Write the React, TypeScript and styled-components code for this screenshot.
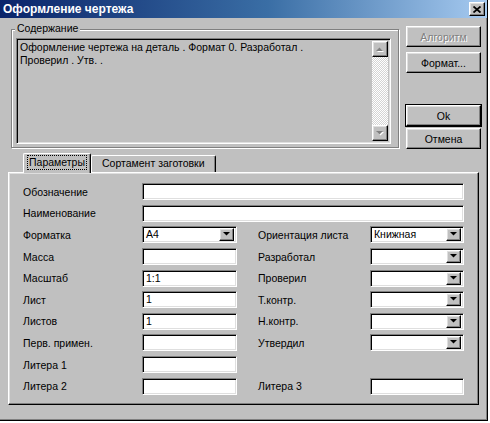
import { FC } from "react";
import styled, { createGlobalStyle, css } from "styled-components";

const GlobalStyle = createGlobalStyle`
    html, body {
        margin: 0;
        padding: 0;
        background: #ffffff;
    }
    body {
        font-family: "Liberation Sans", Arial, sans-serif;
        font-size: 10.5px;
        color: #000000;
    }
`

const raised = css`
    border: 1px solid;
    border-color: #ffffff #000000 #000000 #ffffff;
    box-shadow: inset -1px -1px 0 #808080, inset 1px 1px 0 #dfdfdf;
`
const sunken = css`
    border: 1px solid;
    border-color: #808080 #ffffff #ffffff #808080;
    box-shadow: inset 1px 1px 0 #000000, inset -1px -1px 0 #dfdfdf;
`

const Window = styled.div`
    box-sizing: border-box;
    width: 488px;
    height: 421px;
    background: #c0c0c0;
    border-right: 1px solid #000000;
    border-bottom: 1px solid #000000;
    box-shadow: inset -1px -1px 0 #808080;
    display: flex;
    flex-direction: column;
`
const TitleBar = styled.div`
    flex: none;
    height: 18px;
    display: flex;
    align-items: center;
    justify-content: space-between;
    padding: 0 2px 0 3px;
    background: linear-gradient(90deg, #0a246a 0%, #3a6ea5 55%, #a6caf0 100%);
    color: #ffffff;
    font-weight: bold;
    font-size: 12px;
`
const CloseButton = styled.div`
    box-sizing: border-box;
    width: 16px;
    height: 14px;
    display: flex;
    align-items: center;
    justify-content: center;
    background: #c0c0c0;
    ${raised}
`
const Body = styled.div`
    flex: 1;
    display: flex;
    flex-direction: column;
    padding: 8px 0 0 8px;
`
const TopRow = styled.div`
    display: flex;
    align-items: flex-start;
`
const GroupBox = styled.div`
    position: relative;
    box-sizing: border-box;
    width: 388px;
    height: 119px;
    margin: 3px 0 0 3px;
    padding: 8px 7px 3px 4px;
    border: 1px solid #808080;
    box-shadow: 1px 1px 0 #ffffff, inset 1px 1px 0 #ffffff;
    display: flex;
`
const GroupLabel = styled.span`
    position: absolute;
    top: -8px;
    left: 3px;
    padding: 0 2px;
    line-height: 13px;
    background: #c0c0c0;
`
const TextBox = styled.div`
    flex: 1;
    box-sizing: border-box;
    display: flex;
    background: #c0c0c0;
    padding: 2px;
    ${sunken}
`
const ContentText = styled.div`
    flex: 1;
    padding: 0 2px 0 1px;
    line-height: 13px;
    white-space: pre;
    overflow: hidden;
`
const ScrollBar = styled.div`
    width: 16px;
    display: flex;
    flex-direction: column;
    justify-content: space-between;
    background: repeating-conic-gradient(#ffffff 0 25%, #d4d4d4 0 50%) 0 0 / 2px 2px;
`
const ScrollArrow = styled.div`
    box-sizing: border-box;
    width: 16px;
    height: 16px;
    display: flex;
    align-items: center;
    justify-content: center;
    background: #c0c0c0;
    ${raised}
`
const ButtonColumn = styled.div`
    display: flex;
    flex-direction: column;
    margin-left: 7px;
    width: 75px;
`
const DialogButton = styled.div<{ $gap: number; $default?: boolean; $disabled?: boolean }>`
    box-sizing: border-box;
    height: 21px;
    margin-top: ${(p) => p.$gap}px;
    display: flex;
    align-items: center;
    justify-content: center;
    background: #c0c0c0;
    ${raised}
    color: ${(p) => (p.$disabled ? "#808080" : "#000000")};
    text-shadow: ${(p) => (p.$disabled ? "1px 1px 0 #ffffff" : "none")};
    outline: ${(p) => (p.$default ? "1px solid #000000" : "none")};
`
const TabStrip = styled.div`
    position: relative;
    z-index: 1;
    display: flex;
    align-items: flex-end;
    height: 20px;
    margin: 4px 0 -1px 0;
    padding-left: 15px;
`
const Tab = styled.div<{ $active?: boolean }>`
    box-sizing: border-box;
    height: ${(p) => (p.$active ? 20 : 17)}px;
    margin-bottom: ${(p) => (p.$active ? 0 : 1)}px;
    padding: ${(p) => (p.$active ? "2px 4px 0 4px" : "1px 9px 0 9px")};
    background: #c0c0c0;
    border-top: 1px solid #ffffff;
    border-left: 1px solid #ffffff;
    border-right: 1px solid #000000;
    border-radius: 2px 2px 0 0;
    box-shadow: inset -1px 0 0 #808080;
    line-height: 13px;
    white-space: nowrap;
`
const TabCaption = styled.span<{ $focused?: boolean }>`
    display: inline-block;
    padding: 0 1px;
    outline: ${(p) => (p.$focused ? "1px dotted #000000" : "none")};
`
const Panel = styled.div`
    box-sizing: border-box;
    width: 471px;
    height: 233px;
    padding: 8px 0 0 14px;
    background: #c0c0c0;
    ${raised}
`
const FormGrid = styled.div`
    display: grid;
    grid-template-columns: 119px 95px 21px 112px 94px;
    grid-auto-rows: 21.6px;
    align-items: center;
`
const FieldLabel = styled.div<{ $row: number; $col: string }>`
    grid-row: ${(p) => p.$row};
    grid-column: ${(p) => p.$col};
    white-space: nowrap;
`
const Field = styled.div<{ $row: number; $col: string }>`
    grid-row: ${(p) => p.$row};
    grid-column: ${(p) => p.$col};
    box-sizing: border-box;
    height: 17px;
    display: flex;
    align-items: center;
    padding: 2px 2px 2px 3px;
    background: #ffffff;
    line-height: 13px;
    ${sunken}
`
const FieldText = styled.span`
    flex: 1;
    white-space: nowrap;
`
const DropButton = styled.div`
    box-sizing: border-box;
    flex: none;
    width: 15px;
    height: 13px;
    display: flex;
    align-items: center;
    justify-content: center;
    background: #c0c0c0;
    ${raised}
`

const Arrow: FC<{ up?: boolean; disabled?: boolean }> = ({ up, disabled }) => (
    <svg width="8" height="5" viewBox="0 0 8 5">
        {disabled && <path d={up ? "M1 5h7L4.5 1.5z" : "M1 1h7L4.5 4.5z"} fill="#ffffff" />}
        <path d={up ? "M0 4h7L3.5 0.5z" : "M0 0h7L3.5 3.5z"} fill={disabled ? "#808080" : "#000000"} />
    </svg>
)

type Cell = { label: string; value?: string; combo?: boolean; wide?: boolean };
type Row = { left: Cell; right?: Cell };

const rows: Row[] = [
    { left: { label: "Обозначение", wide: true } },
    { left: { label: "Наименование", wide: true } },
    { left: { label: "Форматка", value: "A4", combo: true }, right: { label: "Ориентация листа", value: "Книжная", combo: true } },
    { left: { label: "Масса" }, right: { label: "Разработал", combo: true } },
    { left: { label: "Масштаб", value: "1:1" }, right: { label: "Проверил", combo: true } },
    { left: { label: "Лист", value: "1" }, right: { label: "Т.контр.", combo: true } },
    { left: { label: "Листов", value: "1" }, right: { label: "Н.контр.", combo: true } },
    { left: { label: "Перв. примен." }, right: { label: "Утвердил", combo: true } },
    { left: { label: "Литера 1" } },
    { left: { label: "Литера 2" }, right: { label: "Литера 3" } },
];

const renderCell = (cell: Cell, row: number, labelCol: string, fieldCol: string) => (
    <>
        <FieldLabel $row={row} $col={labelCol}>{cell.label}</FieldLabel>
        <Field $row={row} $col={cell.wide ? "2 / 6" : fieldCol}>
            <FieldText>{cell.value}</FieldText>
            {cell.combo && (
                <DropButton>
                    <Arrow />
                </DropButton>
            )}
        </Field>
    </>
)

const App: FC = () => {
    return (
        <>
            <GlobalStyle />
            <Window>
                <TitleBar>
                    <span>Оформление чертежа</span>
                    <CloseButton>
                        <svg width="8" height="7" viewBox="0 0 8 7">
                            <path d="M0.5 0.5L7.5 6.5M7.5 0.5L0.5 6.5" stroke="#000000" strokeWidth="1.8" />
                        </svg>
                    </CloseButton>
                </TitleBar>

                <Body>
                    <TopRow>
                        <GroupBox>
                            <GroupLabel>Содержание</GroupLabel>
                            <TextBox>
                                <ContentText>
                                    {"Оформление чертежа на деталь . Формат 0. Разработал .\nПроверил . Утв. ."}
                                </ContentText>
                                <ScrollBar>
                                    <ScrollArrow><Arrow up disabled /></ScrollArrow>
                                    <ScrollArrow><Arrow disabled /></ScrollArrow>
                                </ScrollBar>
                            </TextBox>
                        </GroupBox>

                        <ButtonColumn>
                            <DialogButton $gap={0} $disabled>Алгоритм</DialogButton>
                            <DialogButton $gap={5}>Формат...</DialogButton>
                            <DialogButton $gap={32} $default>Ok</DialogButton>
                            <DialogButton $gap={2}>Отмена</DialogButton>
                        </ButtonColumn>
                    </TopRow>

                    <TabStrip>
                        <Tab $active>
                            <TabCaption $focused>Параметры</TabCaption>
                        </Tab>
                        <Tab>
                            <TabCaption>Сортамент заготовки</TabCaption>
                        </Tab>
                    </TabStrip>

                    <Panel>
                        <FormGrid>
                            {rows.map((r, i) => (
                                <div key={r.left.label} style={{ display: "contents" }}>
                                    {renderCell(r.left, i + 1, "1", "2")}
                                    {r.right && renderCell(r.right, i + 1, "4", "5")}
                                </div>
                            ))}
                        </FormGrid>
                    </Panel>
                </Body>
            </Window>
        </>
    )
}

export default App;
